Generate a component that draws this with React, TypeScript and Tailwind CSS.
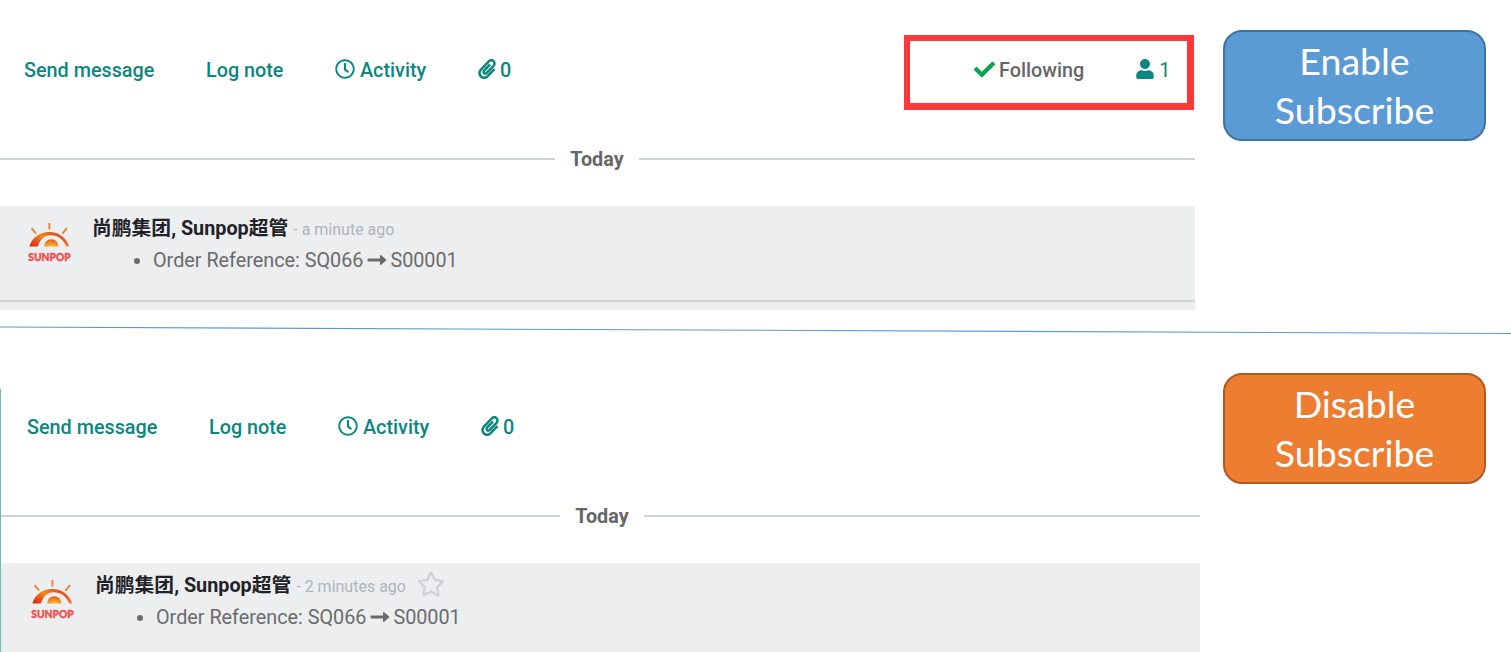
import type { ReactNode } from "react";
import { FaCheck, FaPaperclip, FaRegClock, FaRegStar, FaUser } from "react-icons/fa";

function Logo({ id }: { id: string }) {
  return (
    <svg width="48" height="46" viewBox="0 0 48 46" className="-mr-[2px] block shrink-0 overflow-visible">
      <defs>
        <linearGradient id={id + "-arc"} x1="0" y1="1" x2="1" y2="0.3">
          <stop offset="0" stopColor="#d81c10" />
          <stop offset="0.55" stopColor="#f08a1e" />
          <stop offset="1" stopColor="#dc3a22" />
        </linearGradient>
        <radialGradient id={id + "-sun"} cx="0.5" cy="1" r="0.9">
          <stop offset="0" stopColor="#f9c32c" />
          <stop offset="1" stopColor="#e8641b" />
        </radialGradient>
      </defs>
      <g stroke="#ea8330" strokeWidth="1.9">
        <path d="M23.4 0v6.500M5.600 5.200l4.400 5.400M41 5.200l-4.600 5.400" />
      </g>
      <path
        d="M3.400 23.500C6 14 14.500 9 23.200 9c9.500 0 17.300 5.500 19.800 14.500h-2.700C37.300 16 31.300 12.200 24.500 12.200c-6 0-10.500 4.200-12.500 11.300z"
        fill={`url(#${id}-arc)`}
      />
      <path d="M18.300 23.500c0-4.400 3-7.300 7-7.300s7 2.900 7 7.300z" fill={`url(#${id}-sun)`} />
      <text
        x="2.300"
        y="37.700"
        textLength="42.500"
        lengthAdjust="spacingAndGlyphs"
        fill="#ee5350"
        stroke="#ee5350"
        strokeWidth="0.5"
        strokeLinejoin="round"
        fontFamily="Lato, sans-serif"
        fontSize="12"
        fontWeight="900"
      >
        SUNPOP
      </text>
    </svg>
  );
}

function Toolbar({ children }: { children?: ReactNode }) {
  return (
    <div className="flex h-[75px] items-center pl-6 text-[19.8px] font-medium text-[#0b877f]">
      <span className="w-[182px] pt-[2px]">Send message</span>
      <span className="w-[129px] pt-[2px]">Log note</span>
      <span className="flex w-[142px] items-center gap-[5px]">
        <FaRegClock size={20} className="mb-px" />
        <span className="pt-[2px]">Activity</span>
      </span>
      <span className="flex items-center gap-[3px]">
        <FaPaperclip size={20} className="mb-px" />
        <span className="pt-[2px]">0</span>
      </span>
      {children}
    </div>
  );
}

function DateDivider({ left }: { left: string }) {
  return (
    <div className="flex h-[30px] items-center text-[19.8px] font-bold text-[#666]">
      <span className={`h-[2px] shrink-0 bg-[#ced3d7] ${left}`} />
      <span className="w-[84px] pt-[2px] text-center">Today</span>
      <span className="h-[2px] flex-1 bg-[#ced3d7]" />
    </div>
  );
}

function Message({ id, ago, starred }: { id: string; ago: string; starred?: boolean }) {
  return (
    <div className="flex pl-[26px] pt-[17px]">
      <Logo id={id} />
      <div className="-mt-[11px] ml-5">
        <div className="flex h-8 items-center whitespace-pre">
          <span className="pt-[2px] text-[19.8px] font-bold text-[#1f2328]">尚鹏集团, Sunpop超管</span>
          <span className="ml-[5px] pt-[3px] text-base text-[#adb5bd]">- {ago}</span>
          {starred && <FaRegStar size={28} className="mb-[2px] ml-[11px] text-[#cfd2d6]" />}
        </div>
        <div className="flex h-8 items-center pl-[42px] pt-px text-[19.8px] text-[#6b6b6b]">
          <span className="mr-[13px] size-[6px] rounded-full bg-[#6b6b6b]" />
          <span className="pt-px">Order Reference: SQ066</span>
          <svg width="27" height="20" viewBox="0 0 27 20" className="mb-[2px] block" fill="currentColor">
            <path d="M5 8.400h12V5.800c0-.7.700-1 1.200-.6l4.900 4.200c.4.300.4.900 0 1.200l-4.900 4.200c-.5.400-1.200.1-1.200-.6v-2.600H5c-.3 0-.5-.2-.5-.5V8.900c0-.3.200-.5.500-.5z" />
          </svg>
          <span className="pt-px">S00001</span>
        </div>
      </div>
    </div>
  );
}

function Label({ word, color }: { word: string; color: string }) {
  return (
    <div
      className={`flex h-[111px] w-[263px] flex-col items-center justify-center rounded-[19px] border-2 pb-[2px] text-center font-['Lato',sans-serif] text-[37.5px] leading-[49px] text-white ${color}`}
    >
      <span>{word}</span>
      <span>Subscribe</span>
    </div>
  );
}

export default function App() {
  return (
    <div className="h-[652px] w-[1511px] overflow-hidden bg-white font-['Roboto','Noto_Sans_CJK_SC',sans-serif]">
      <section className="flex h-[326px]">
        <div className="w-[1195px] pt-8">
          <Toolbar>
            <div className="-mb-[5px] ml-auto mr-px flex h-[75px] w-[290px] items-center border-[6px] border-b-[7px] border-r-[7px] border-[#fa3a3a] pb-[5px] pl-16">
              <FaCheck size={21} className="text-[#0aa34f]" />
              <span className="ml-1 pt-[3px] text-[#666]">Following</span>
              <FaUser size={20} className="ml-[51px]" />
              <span className="ml-1 pt-[3px] font-normal">1</span>
            </div>
          </Toolbar>
          <div className="mt-[37px]">
            <DateDivider left="w-[555px]" />
          </div>
          <div className="mt-8 h-[94px] bg-[#edeef0]">
            <Message id="first" ago="a minute ago" />
          </div>
          <div className="h-[10px] border-t-2 border-[#ced2d5] bg-[#eeeeef]" />
        </div>
        <div className="ml-7 pt-[30px]">
          <Label word="Enable" color="border-[#41719c] bg-[#5b9bd5]" />
        </div>
      </section>
      <svg width="1511" height="9" viewBox="0 0 1511 9" className="block">
        <line x1="0" y1="1" x2="1511" y2="7.500" stroke="#5f99cc" strokeWidth="1.100" />
      </svg>
      <section className="flex h-[317px]">
        <div className="w-[1200px] pt-[54px]">
          <div className="h-[263px] border-l border-[#6dbdb4]">
            <div className="pl-[2px]">
              <Toolbar />
            </div>
            <div className="mt-[37px]">
              <DateDivider left="w-[559px]" />
            </div>
            <div className="mt-8 h-[90px] bg-[#edeef0] pl-[2px]">
              <Message id="second" ago="2 minutes ago" starred />
            </div>
          </div>
        </div>
        <div className="ml-[23px] pt-[38px]">
          <Label word="Disable" color="border-[#ae5a21] bg-[#ed7d31]" />
        </div>
      </section>
    </div>
  );
}
